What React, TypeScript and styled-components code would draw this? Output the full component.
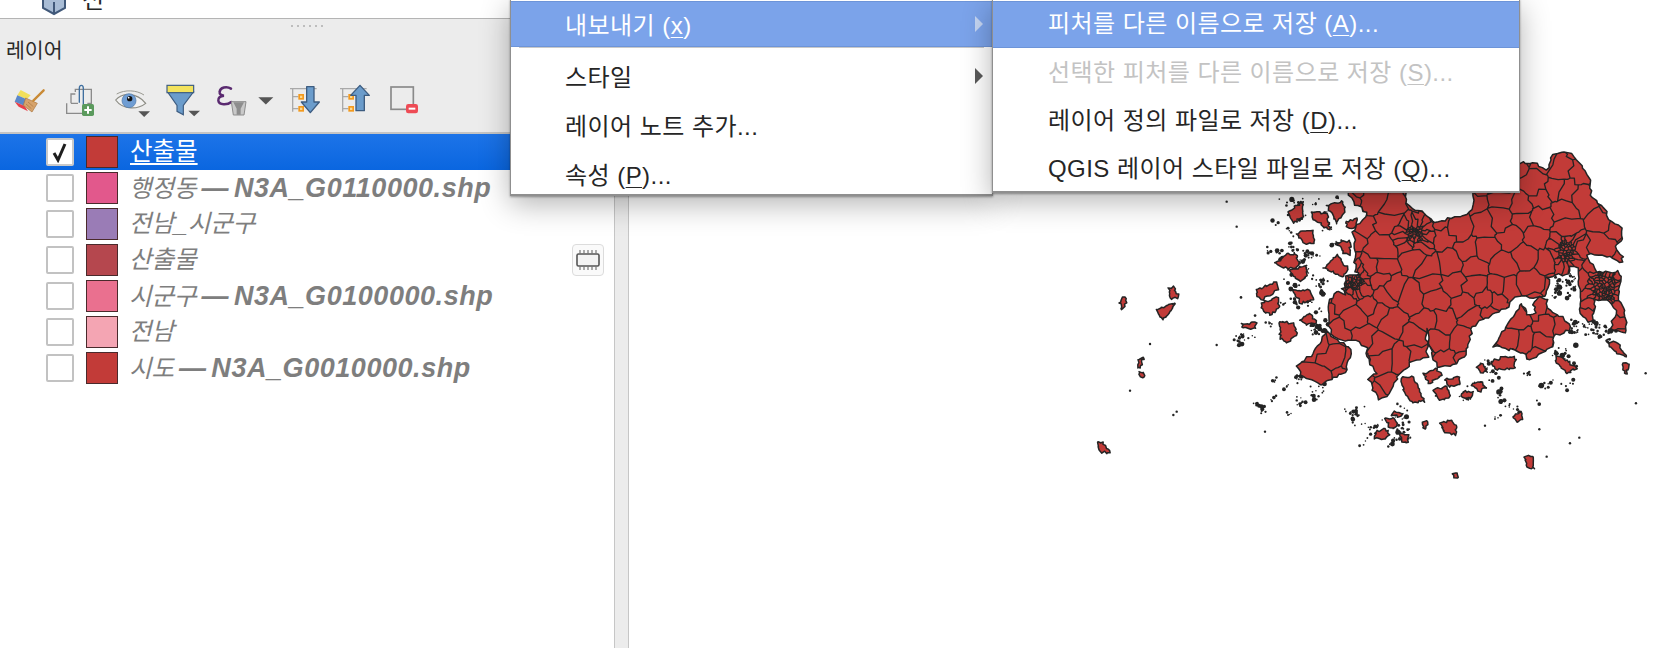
import styled, { createGlobalStyle } from "styled-components";

const FONT = `"Liberation Sans", "Noto Sans CJK KR", sans-serif`;
const LAND = "#c23b38";
const LINE = "#242424";

const GlobalStyle = createGlobalStyle`
  html, body { margin: 0; padding: 0; background: #fff; }
  body { width: 1678px; height: 648px; overflow: hidden; font-family: ${FONT}; }
`;

// ---------- map data, in 3x units of the crop at (1340,140) ----------
type Pt = [number, number];

const MAINLAND =
  "620,90 640,42 665,35 695,42 725,75 750,115 752,165 785,195 815,245 845,265 848,295 825,320 848,350 848,368 810,350 775,345 740,345 760,375 770,395 790,400 835,390 842,425 835,480 855,510 858,580 810,565 830,510 800,480 765,480 760,540 745,545 720,520 720,470 715,385 690,380 685,400 620,410 630,420 615,470 580,475 550,465 525,470 505,500 430,540 395,560 390,600 375,650 330,680 290,680 270,620 262,565 258,600 265,650 220,665 180,700 140,770 115,780 85,720 110,700 80,650 85,625 50,600 15,605 -20,590 -35,555 -35,490 -10,455 18,465 5,445 50,445 75,425 45,395 45,300 35,275 70,240 82,215 45,195 25,165 30,135 195,135 198,190 225,210 255,220 285,250 325,235 380,225 400,195 405,135 540,70 590,68";
const GOHEUNG =
  "460,620 495,570 510,540 545,490 560,525 590,520 580,495 600,470 625,480 620,500 680,545 690,570 640,590 640,620 590,650 570,660 550,640 495,625";
const JINDO = "-130,680 -80,640 -60,610 -40,575 10,610 32,630 20,690 -10,710 -60,735 -110,710";
const MOKPO = "18,408 68,402 80,428 52,450 14,442";

const ISLANDS = [
  "-195,370 -160,340 -130,345 -125,375 -155,390",
  "-250,450 -190,425 -185,450 -235,480 -250,470",
  "-235,490 -190,470 -180,500 -210,525 -230,515",
  "-140,450 -90,450 -80,480 -120,490",
  "-150,390 -100,375 -100,405 -120,425 -140,410",
  "-180,545 -140,550 -130,580 -160,610 -180,590",
  "-120,540 -90,520 -70,550 -100,555",
  "-155,215 -110,185 -110,230 -140,250",
  "-85,215 -40,220 -30,270 -80,240",
  "-40,195 10,185 15,215 -10,250",
  "-130,280 -80,270 -80,310 -105,310",
  "-10,310 30,300 30,345 10,340",
  "-50,385 -10,345 25,385 10,410",
  "20,245 50,235 45,265 20,260",
  "455,665 495,650 525,650 525,685 470,690",
  "250,700 290,685 305,705 265,730",
  "315,720 360,710 360,735 330,740",
  "185,715 215,710 235,735 255,785 215,785 190,750",
  "280,750 320,740 330,770 300,780",
  "370,755 400,755 385,780 365,770",
  "395,735 420,725 440,745 415,755",
  "410,680 430,670 440,695 420,700",
  "650,650 680,660 710,685 680,700 650,670",
  "800,605 835,610 860,650 830,640",
  "850,670 865,670 862,700 852,700",
  "300,850 335,840 350,860 345,885 315,880",
  "105,880 135,865 150,885 125,900 105,895",
  "135,835 165,835 170,860 150,865",
  "180,880 205,885 200,910 185,905",
  "520,830 545,815 550,840 530,845",
  "553,950 580,950 582,985 560,980",
  "338,1000 352,998 355,1012 342,1014",
  "248,845 262,842 258,865 248,865",
  "-550,510 -495,490 -515,525 -530,540",
  "-515,445 -500,440 -485,470 -505,480",
  "-662,490 -645,470 -640,490 -655,510",
  "-605,660 -590,650 -598,685 -608,685",
  "-602,695 -590,698 -588,710 -598,712",
  "-725,905 -710,905 -690,940 -720,935",
  "-295,550 -250,550 -255,565 -290,565",
  "190,820 165,815 155,825 180,830",
];

function makeRandom(seed: number) {
  let s = seed;
  return () => {
    s = (s * 1664525 + 1013904223) % 4294967296;
    return s / 4294967296;
  };
}

const parsePoints = (points: string) => points.split(" ").map((p) => p.split(",").map(Number) as Pt);

// breaks a straight-edged shape into a rough coastline
function roughen(points: string, step: number, amp: number, seed: number) {
  const rnd = makeRandom(seed);
  const pts = parsePoints(points);
  const out: string[] = [];
  pts.forEach((a, i) => {
    const b = pts[(i + 1) % pts.length];
    const n = Math.max(1, Math.round(Math.hypot(b[0] - a[0], b[1] - a[1]) / step));
    for (let k = 0; k < n; k++) {
      const j = k === 0 ? 0.5 : 1;
      const x = a[0] + ((b[0] - a[0]) * k) / n + (rnd() - 0.5) * amp * j;
      const y = a[1] + ((b[1] - a[1]) * k) / n + (rnd() - 0.5) * amp * j;
      out.push(`${x.toFixed(1)},${y.toFixed(1)}`);
    }
  });
  return out.join(" ");
}

const MAINLAND_R = roughen(MAINLAND, 11, 9, 3);
const GOHEUNG_R = roughen(GOHEUNG, 10, 9, 5);
const JINDO_R = roughen(JINDO, 10, 8, 9);
const MOKPO_R = roughen(MOKPO, 10, 6, 13);
const ISLANDS_R = ISLANDS.map((p, i) => roughen(p, 6, 8, 20 + i));

function clipCell(cell: Pt[], site: Pt, other: Pt) {
  const mx = (site[0] + other[0]) / 2;
  const my = (site[1] + other[1]) / 2;
  const nx = other[0] - site[0];
  const ny = other[1] - site[1];
  const side = (p: Pt) => (p[0] - mx) * nx + (p[1] - my) * ny;
  const out: Pt[] = [];
  cell.forEach((a, i) => {
    const b = cell[(i + 1) % cell.length];
    const sa = side(a);
    const sb = side(b);
    if (sa <= 0) out.push(a);
    if (sa < 0 !== sb < 0) {
      const t = sa / (sa - sb);
      out.push([a[0] + (b[0] - a[0]) * t, a[1] + (b[1] - a[1]) * t]);
    }
  });
  return out;
}

// voronoi cells with wobbly shared edges stand in for the district borders
function buildDistricts() {
  const rnd = makeRandom(17);
  const sites: Pt[] = [];
  for (let y = 20, row = 0; y < 800; y += 58, row++) {
    for (let x = -70 + (row % 2) * 36; x < 890; x += 70) {
      sites.push([x + (rnd() - 0.5) * 56, y + (rnd() - 0.5) * 44]);
    }
  }
  const cities: [number, number, number, number][] = [
    [225, 282, 30, 46],
    [677, 335, 30, 50],
    [792, 440, 42, 80],
    [45, 425, 26, 36],
  ];
  cities.forEach(([cx, cy, r, n]) => {
    for (let i = 0; i < n; i++) {
      const a = rnd() * Math.PI * 2;
      const d = Math.sqrt(rnd()) * r;
      sites.push([cx + Math.cos(a) * d, cy + Math.sin(a) * d * 1.1]);
    }
  });
  const seen = new Set<string>();
  let d = "";
  sites.forEach((site, si) => {
    let cell: Pt[] = [
      [-200, -100],
      [1000, -100],
      [1000, 900],
      [-200, 900],
    ];
    sites.forEach((other, oi) => {
      if (oi !== si && cell.length) cell = clipCell(cell, site, other);
    });
    cell.forEach((a, i) => {
      const b = cell[(i + 1) % cell.length];
      const mx = (a[0] + b[0]) / 2;
      const my = (a[1] + b[1]) / 2;
      const key = `${Math.round(mx)}:${Math.round(my)}`;
      if (seen.has(key)) return;
      seen.add(key);
      const len = Math.hypot(b[0] - a[0], b[1] - a[1]);
      const w = Math.min(len * 0.2, 9);
      const r2 = makeRandom(Math.round(mx * 31 + my * 97) & 0xffff);
      const p1 = [a[0] + (b[0] - a[0]) * 0.33 + (r2() - 0.5) * w * 2, a[1] + (b[1] - a[1]) * 0.33 + (r2() - 0.5) * w * 2];
      const p2 = [a[0] + (b[0] - a[0]) * 0.67 + (r2() - 0.5) * w * 2, a[1] + (b[1] - a[1]) * 0.67 + (r2() - 0.5) * w * 2];
      d += `M${a[0].toFixed(1)} ${a[1].toFixed(1)}L${p1[0].toFixed(1)} ${p1[1].toFixed(1)}L${p2[0].toFixed(1)} ${p2[1].toFixed(1)}L${b[0].toFixed(1)} ${b[1].toFixed(1)}`;
    });
  });
  return d;
}

const DISTRICTS = buildDistricts();

const SPECK_ZONES = [
  [-10, 780, 200, 60, 28],
  [60, 820, 170, 100, 46],
  [370, 660, 120, 130, 36],
  [450, 700, 320, 200, 34],
  [635, 420, 80, 50, 40],
  [690, 540, 90, 50, 40],
  [745, 560, 100, 40, 22],
  [620, 600, 90, 80, 18],
  [-280, 700, 220, 130, 64],
  [-300, 450, 110, 160, 34],
  [-220, 170, 220, 220, 110],
  [-180, 380, 150, 230, 90],
  [-70, 560, 40, 60, 10],
] as const;

// random walks, so that the dots form chains like the small islands do
const SPECKS = (() => {
  const rnd = makeRandom(7);
  const out: { x: number; y: number; r: number }[] = [];
  SPECK_ZONES.forEach(([x, y, w, h, n]) => {
    let px = x + rnd() * w;
    let py = y + rnd() * h;
    for (let i = 0; i < n; i++) {
      if (rnd() < 0.72) {
        px += (rnd() - 0.5) * 26;
        py += (rnd() - 0.5) * 26;
      } else {
        px = x + rnd() * w;
        py = y + rnd() * h;
      }
      out.push({ x: px, y: py, r: 2.2 + rnd() * rnd() * 7 });
    }
  });
  [
    [917, 700], [888, 790], [718, 893], [690, 910], [598, 868], [620, 950], [435, 857],
    [-370, 615], [-570, 612], [-630, 752], [-500, 825], [-490, 815], [-225, 875], [-310, 260], [-340, 185],
  ].forEach(([x, y]) => out.push({ x, y, r: 3.6 }));
  return out;
})();

// ---------- layout ----------
const Page = styled.div`
  position: relative;
  display: flex;
  width: 1678px;
  height: 648px;
  overflow: hidden;
  background: #fff;
  color: #262626;
`;

const Sidebar = styled.aside`
  width: 614px;
  flex: none;
  display: flex;
  flex-direction: column;
`;

const BrowserStrip = styled.div`
  height: 18px;
  flex: none;
  display: flex;
  align-items: flex-end;
  overflow: hidden;
  padding-left: 42px;
  box-sizing: content-box;
  border-bottom: 1px solid #b4b4b4;
  svg { flex: none; }
`;

const BrowserLabel = styled.span`
  margin-left: 16px;
  margin-bottom: 3px;
  font-size: 24px;
  line-height: 30px;
  height: 30px;
  flex: none;
`;

const PanelHeader = styled.header`
  flex: none;
  background: #ececec;
  padding: 6px 0 12px;
  border-bottom: 2px solid #c4c4c4;
`;

const Grip = styled.div`
  width: 32px;
  height: 2px;
  margin: 0 auto;
  background: repeating-linear-gradient(90deg, #bdbdbd 0 2px, transparent 2px 6px);
`;

const PanelTitle = styled.h2`
  margin: 9px 0 0 6px;
  font-size: 20.5px;
  font-weight: 400;
  line-height: 30px;
  color: #2a2a2a;
`;

const Toolbar = styled.div`
  display: flex;
  margin: 10px 0 0 5px;
  height: 44px;
`;

const ToolButton = styled.svg`
  flex: none;
  height: 44px;
  display: block;
`;

const LayerList = styled.ul`
  list-style: none;
  margin: 0;
  padding: 0;
`;

const LayerRow = styled.li<{ $selected?: boolean }>`
  height: 36px;
  display: flex;
  align-items: center;
  padding: 0 10px 0 46px;
  background: ${(p) => (p.$selected ? "linear-gradient(#1d74e8, #0a66e0)" : "transparent")};
`;

const CheckBox = styled.span<{ $checked?: boolean }>`
  width: 28px;
  height: 28px;
  box-sizing: border-box;
  flex: none;
  display: flex;
  align-items: center;
  justify-content: center;
  background: #fff;
  border: 2px solid ${(p) => (p.$checked ? "#c9c9c9" : "#c2c2c2")};
  border-radius: 2px;
`;

const Swatch = styled.span<{ $color: string }>`
  width: 32px;
  height: 32px;
  box-sizing: border-box;
  flex: none;
  margin-left: 12px;
  background: ${(p) => p.$color};
  border: 1px solid #4a2a2c;
`;

const LayerName = styled.span<{ $selected?: boolean }>`
  margin-left: ${(p) => (p.$selected ? 12 : 11)}px;
  font-size: 24.5px;
  line-height: 36px;
  white-space: nowrap;
  color: ${(p) => (p.$selected ? "#fff" : "#7e7e7e")};
  font-style: ${(p) => (p.$selected ? "normal" : "italic")};
  text-decoration: ${(p) => (p.$selected ? "underline" : "none")};
  text-underline-offset: 3px;
  text-decoration-thickness: 2px;
  b {
    font-weight: 700;
    font-size: 27px;
    letter-spacing: 0.55px;
    word-spacing: -3.2px;
  }
`;

const ChipButton = styled.span`
  margin-left: auto;
  width: 32px;
  height: 32px;
  box-sizing: border-box;
  flex: none;
  display: flex;
  align-items: center;
  justify-content: center;
  border: 1px solid #dcdcdc;
  border-radius: 4px;
  background: #fafafa;
`;

const Splitter = styled.div`
  width: 13px;
  flex: none;
  background: #ececec;
  border-left: 1px solid #c6c6c6;
  border-right: 1px solid #c6c6c6;
`;

const MapCanvas = styled.main`
  position: relative;
  flex: 1;
  background: #fff;
`;

const MapDrawing = styled.svg`
  position: absolute;
  left: 0;
  top: 0;
`;

const Menu = styled.div<{ $left: number; $width: number; $height: number }>`
  position: absolute;
  top: -1px;
  left: ${(p) => p.$left}px;
  width: ${(p) => p.$width}px;
  height: ${(p) => p.$height}px;
  box-sizing: border-box;
  padding-top: 1px;
  background: #fff;
  border: 1px solid #8f8f8f;
  border-bottom-width: 2px;
  box-shadow: 0 8px 28px rgba(0, 0, 0, 0.3), 0 1px 2px rgba(0, 0, 0, 0.35);
  font-size: 24px;
  letter-spacing: 0.45px;
`;

const MenuRow = styled.div<{ $h: number; $pad: number; $lift?: number; $active?: boolean; $disabled?: boolean }>`
  position: relative;
  height: ${(p) => p.$h}px;
  box-sizing: border-box;
  display: flex;
  align-items: center;
  padding-left: ${(p) => p.$pad}px;
  padding-bottom: ${(p) => p.$lift ?? 0}px;
  white-space: nowrap;
  background: ${(p) => (p.$active ? "#7ba3ea" : "transparent")};
  box-shadow: ${(p) => (p.$active ? "inset 0 -1px 0 #6d94d8, inset 0 1px 0 #6d94d8" : "none")};
  color: ${(p) => (p.$active ? "#fff" : p.$disabled ? "#c3c3c3" : "#262626")};
  u {
    text-underline-offset: 3px;
    text-decoration-thickness: 1px;
  }
`;

const MenuArrow = styled.span<{ $light?: boolean }>`
  position: absolute;
  right: 9px;
  top: 50%;
  margin-top: -8px;
  width: 0;
  height: 0;
  border-top: 8px solid transparent;
  border-bottom: 8px solid transparent;
  border-left: 8px solid ${(p) => (p.$light ? "#c5d6f3" : "#5a5a5a")};
`;

const MenuSeparator = styled.div`
  height: 1px;
  margin: 0 8px 3px;
  background: #c8c8c8;
`;

// ---------- icons ----------
const Caret = ({ x, y, w }: { x: number; y: number; w: number }) => (
  <polygon points={`${x},${y} ${x + w},${y} ${x + w / 2},${y + w * 0.48}`} fill="#555" />
);

const ARROW_LINE = "#3d5c80";
const ARROW_FILL = "#6b9ccb";

const TableLines = ({ x }: { x: number }) => (
  <g>
    <path d={`M${x} 56H${x + 80}M${x + 8} 56V125M${x + 8} 80H${x + 25}M${x + 8} 116H${x + 25}`} stroke="#a9a9a9" strokeWidth="4" fill="none" />
    <rect x={x + 25} y="72" width="17" height="17" fill="#f39a1e" />
    <rect x={x + 25} y="108" width="17" height="17" fill="#f39a1e" />
    <rect x={x + 30} y="77" width="7" height="7" fill="#fbd890" />
    <rect x={x + 30} y="113" width="7" height="7" fill="#fbd890" />
  </g>
);

const toolBox = (x: number, w = 150) => ({ viewBox: `${x} 18 ${w} 132`, width: w / 3 });

function Toolbuttons() {
  return (
    <Toolbar>
      <ToolButton {...toolBox(15)}>
        <polygon points="62,60 92,76 80,88 52,76" fill="#f2df5a" />
        <polygon points="52,76 80,88 74,108 44,95" fill="#5b88c9" />
        <polygon points="44,95 74,108 84,124 56,110" fill="#e8404a" />
        <polygon points="77,84 112,100 96,126 70,106" fill="#d6a36c" stroke="#a9743c" strokeWidth="2" />
        <path d="M84 96L100 110M78 102L94 116" stroke="#a9743c" strokeWidth="2" />
        <path d="M100 92L131 61" stroke="#c98a36" strokeWidth="7" strokeLinecap="round" />
      </ToolButton>
      <ToolButton {...toolBox(165)}>
        <path d="M226 66V58H274V100H262" stroke="#8b8b8b" strokeWidth="4" fill="none" />
        <path d="M213 100V72H226M213 100H234" stroke="#8b8b8b" strokeWidth="4" fill="none" />
        <path d="M200 100V130H250" stroke="#8b8b8b" strokeWidth="4" fill="none" />
        <path d="M238 98V55C238 43 250 43 250 55V104" stroke="#3f6f9f" strokeWidth="4" fill="none" />
        <rect x="246" y="102" width="36" height="36" rx="5" fill="#5b9a5d" />
        <path d="M264 109V131M253 120H275" stroke="#fff" strokeWidth="6" />
      </ToolButton>
      <ToolButton {...toolBox(315)}>
        <path d="M347 90C365 68 410 66 437 100C415 118 370 122 347 90Z" fill="#f2f2f2" stroke="#8c8c84" strokeWidth="3.5" />
        <path d="M350 72C375 58 410 60 432 75" fill="none" stroke="#9a9a92" strokeWidth="3" />
        <circle cx="387" cy="92" r="21" fill="#6f9dd3" stroke="#4c76a6" strokeWidth="2" />
        <circle cx="389" cy="86" r="8" fill="#111" />
        <circle cx="386" cy="83" r="2.5" fill="#fff" />
        <Caret x={415} y={124} w={35} />
      </ToolButton>
      <ToolButton {...toolBox(465)}>
        <polygon points="503,66 580,66 550,106 550,134 531,124 531,106" fill={ARROW_FILL} stroke={ARROW_LINE} strokeWidth="3.5" />
        <rect x="501" y="46" width="80" height="22" fill="#f3e35e" stroke={ARROW_LINE} strokeWidth="3.5" />
        <Caret x={565} y={122} w={35} />
      </ToolButton>
      <ToolButton {...toolBox(-15, 225)}>
        <path d="M63 56C50 48 30 52 29 66C28 72 33 76 42 77C30 78 24 84 25 92C27 106 52 106 64 96" fill="none" stroke="#5a2a70" strokeWidth="7.5" strokeLinecap="round" />
        <path d="M64 95H108L102 135H70Z" fill="#c9c9c9" stroke="#8d8d8d" strokeWidth="3" />
        <path d="M70 97H102L92 116V134H80V116Z" fill="#8d8d8d" />
        <Caret x={145} y={82} w={45} />
      </ToolButton>
      <ToolButton {...toolBox(210)}>
        <TableLines x={240} />
        <polygon points="290,50 312,50 312,96 328,96 301,128 274,96 290,96" fill={ARROW_FILL} stroke={ARROW_LINE} strokeWidth="4" strokeLinejoin="round" />
      </ToolButton>
      <ToolButton {...toolBox(360)}>
        <TableLines x={390} />
        <polygon points="450,46 478,76 463,76 463,122 438,122 438,76 422,76" fill={ARROW_FILL} stroke={ARROW_LINE} strokeWidth="4" strokeLinejoin="round" />
      </ToolButton>
      <ToolButton {...toolBox(510)}>
        <rect x="543" y="51" width="67" height="67" fill="none" stroke="#8a8a8a" strokeWidth="5" />
        <rect x="588" y="102" width="36" height="28" rx="7" fill="#ee4b55" />
        <rect x="596" y="113" width="20" height="6" fill="#fff" />
      </ToolButton>
    </Toolbar>
  );
}

function ChipIcon() {
  return (
    <svg width="26" height="26" viewBox="0 0 26 26" fill="none">
      <rect x="2" y="7" width="22" height="12" rx="1.5" fill="#f4f4f4" stroke="#555" strokeWidth="1.6" />
      <path d="M5 3V7M9 3V7M13 3V7M17 3V7M21 3V7M5 19V23M9 19V23M13 19V23M17 19V23M21 19V23" stroke="#777" strokeWidth="1.2" />
    </svg>
  );
}

// ---------- data ----------
const LAYERS = [
  { name: "산출물", file: "", color: "#c23b38", selected: true },
  { name: "행정동", file: " — N3A_G0110000.shp", color: "#e2588c" },
  { name: "전남_시군구", file: "", color: "#9a7cb6" },
  { name: "산출물", file: "", color: "#b5474e", chip: true },
  { name: "시군구", file: " — N3A_G0100000.shp", color: "#ea708f" },
  { name: "전남", file: "", color: "#f4a5b3" },
  { name: "시도", file: " — N3A_G0010000.shp", color: "#c23b38" },
];

function KoreanMap() {
  return (
    <MapDrawing width="1049" height="648" viewBox="629 0 1049 648">
      <defs>
        <clipPath id="land">
          <polygon points={MAINLAND_R} />
          <polygon points={GOHEUNG_R} />
          <polygon points={JINDO_R} />
          <polygon points={MOKPO_R} />
        </clipPath>
      </defs>
      <g transform="translate(1340 140) scale(0.3333)" stroke={LINE} strokeWidth="4.5" strokeLinejoin="round">
        {SPECKS.map((s, i) => (
          <circle key={i} cx={s.x} cy={s.y} r={s.r} fill={LINE} stroke="none" />
        ))}
        {ISLANDS_R.map((p, i) => (
          <polygon key={i} points={p} fill={LAND} />
        ))}
        <polygon points={MOKPO_R} fill={LAND} />
        <polygon points={MAINLAND_R} fill={LAND} />
        <polygon points={GOHEUNG_R} fill={LAND} />
        <polygon points={JINDO_R} fill={LAND} />
        <path d={DISTRICTS} fill="none" strokeWidth="4" clipPath="url(#land)" />
      </g>
    </MapDrawing>
  );
}

export default function App() {
  return (
    <Page>
      <GlobalStyle />
      <Sidebar>
        <BrowserStrip>
          <svg width="24" height="18" viewBox="0 0 24 18">
            <path d="M1 -4V8L12 14L23 8V-4" fill="#a9bdd6" stroke="#41597a" strokeWidth="2" />
            <path d="M12 2V14" stroke="#41597a" strokeWidth="2" />
          </svg>
          <BrowserLabel>전</BrowserLabel>
        </BrowserStrip>
        <PanelHeader>
          <Grip />
          <PanelTitle>레이어</PanelTitle>
          <Toolbuttons />
        </PanelHeader>
        <LayerList>
          {LAYERS.map((layer, i) => (
            <LayerRow key={i} $selected={layer.selected}>
              <CheckBox $checked={layer.selected}>
                {layer.selected && (
                  <svg width="20" height="22" viewBox="0 0 20 22">
                    <path d="M4 12L8 19L15 3" fill="none" stroke="#1e1e1e" strokeWidth="3" />
                  </svg>
                )}
              </CheckBox>
              <Swatch $color={layer.color} />
              <LayerName $selected={layer.selected}>
                {layer.name}
                {layer.file && <b>{layer.file}</b>}
              </LayerName>
              {layer.chip && (
                <ChipButton>
                  <ChipIcon />
                </ChipButton>
              )}
            </LayerRow>
          ))}
        </LayerList>
      </Sidebar>
      <Splitter />
      <MapCanvas>
        <KoreanMap />
      </MapCanvas>

      <Menu $left={510} $width={483} $height={197}>
        <MenuRow $h={46} $pad={54} $lift={2} $active>
          <span>내보내기 (<u>x</u>)</span>
          <MenuArrow $light />
        </MenuRow>
        <MenuSeparator />
        <MenuRow $h={49} $pad={54}>
          <span>스타일</span>
          <MenuArrow />
        </MenuRow>
        <MenuRow $h={49} $pad={54}>
          <span>레이어 노트 추가...</span>
        </MenuRow>
        <MenuRow $h={49} $pad={54}>
          <span>속성 (<u>P</u>)...</span>
        </MenuRow>
      </Menu>

      <Menu $left={992} $width={528} $height={194}>
        <MenuRow $h={47} $pad={55} $lift={6} $active>
          <span>피처를 다른 이름으로 저장 (<u>A</u>)...</span>
        </MenuRow>
        <MenuRow $h={48} $pad={55} $lift={3} $disabled>
          <span>선택한 피처를 다른 이름으로 저장 (<u>S</u>)...</span>
        </MenuRow>
        <MenuRow $h={48} $pad={55} $lift={3}>
          <span>레이어 정의 파일로 저장 (<u>D</u>)...</span>
        </MenuRow>
        <MenuRow $h={48} $pad={55} $lift={3}>
          <span>QGIS 레이어 스타일 파일로 저장 (<u>Q</u>)...</span>
        </MenuRow>
      </Menu>
    </Page>
  );
}
